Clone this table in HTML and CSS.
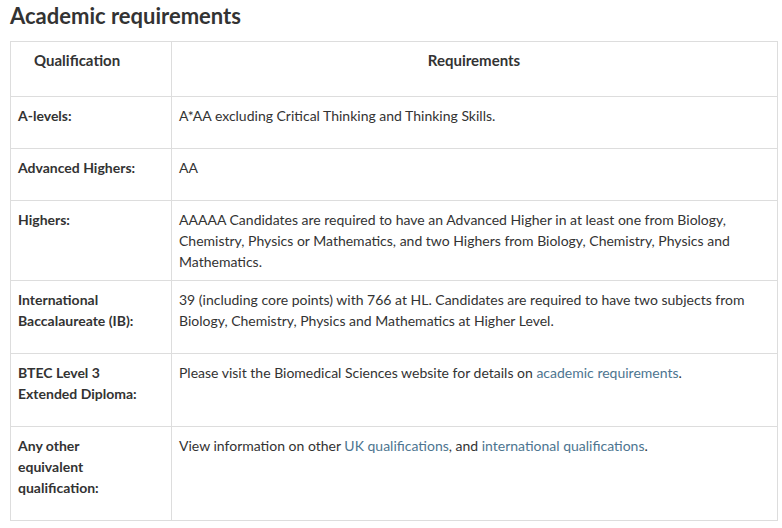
FILE: index.html
```html
<!DOCTYPE html>
<html lang="en">
<head>
<meta charset="utf-8">
<title>Academic requirements</title>
<link rel="stylesheet" href="styles.css">
</head>
<body>
<div class="page">
  <h2 class="title">Academic requirements</h2>
  <table class="req-table">
    <colgroup>
      <col class="col-qual">
      <col class="col-req">
    </colgroup>
    <thead>
      <tr>
        <th class="head-qual">Qualification</th>
        <th class="head-req">Requirements</th>
      </tr>
    </thead>
    <tbody>
      <tr>
        <th class="qual"><p>A-levels:</p></th>
        <td class="req">A*AA excluding Critical Thinking and Thinking Skills.</td>
      </tr>
      <tr>
        <th class="qual"><p>Advanced Highers:</p></th>
        <td class="req">AA</td>
      </tr>
      <tr>
        <th class="qual"><p>Highers:</p></th>
        <td class="req">AAAAA Candidates are required to have an Advanced Higher in at least one from Biology, Chemistry, Physics or Mathematics, and two Highers from Biology, Chemistry, Physics and Mathematics.</td>
      </tr>
      <tr>
        <th class="qual"><p>International Baccalaureate (IB):</p></th>
        <td class="req">39 (including core points) with 766 at HL. Candidates are required to have two subjects from Biology, Chemistry, Physics and Mathematics at Higher Level.</td>
      </tr>
      <tr>
        <th class="qual"><p>BTEC Level 3 Extended Diploma:</p></th>
        <td class="req">Please visit the Biomedical Sciences website for details on <a href="#">academic requirements</a>.</td>
      </tr>
      <tr>
        <th class="qual"><p>Any other equivalent qualification:</p></th>
        <td class="req">View information on other <a href="#">UK qualifications</a>, and <a href="#">international qualifications</a>.</td>
      </tr>
    </tbody>
  </table>
</div>
</body>
</html>
```

FILE: styles.css
```css
html, body {
  margin: 0;
  padding: 0;
  background: #ffffff;
}

body {
  font-family: "Lato", "Liberation Sans", sans-serif;
  font-size: 14px;
  line-height: 21px;
  color: #333333;
}

.page {
  padding: 1px 0 0 10px;
}

.title {
  margin: 0 0 10px 0;
  font-size: 22px;
  line-height: 30px;
  font-weight: 700;
  color: #333333;
}

.req-table {
  width: 768px;
  border-collapse: collapse;
  table-layout: fixed;
}

.col-qual {
  width: 161px;
}

.req-table th,
.req-table td {
  border: 1px solid #dddddd;
  vertical-align: top;
  padding: 8px 8px 8px 7px;
  text-align: left;
}

.head-qual,
.head-req {
  font-weight: 700;
  font-size: 15px;
  padding-bottom: 25px !important;
}

.head-qual {
  padding-left: 23px !important;
}

.head-req {
  text-align: center !important;
}

.qual {
  font-weight: 700;
  padding-right: 28px !important;
}

.qual p {
  margin: 0 0 14px 0;
}

.req a {
  color: #4d7590;
  text-decoration: none;
}
```
